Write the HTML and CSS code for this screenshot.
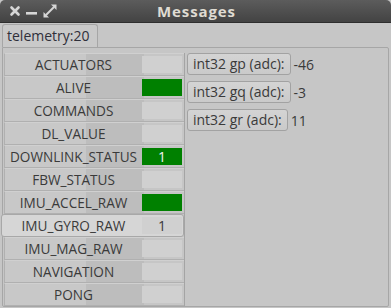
FILE: index.html
```html
<!DOCTYPE html>
<html>
<head>
<meta charset="utf-8">
<link rel="stylesheet" href="styles.css">
</head>
<body>
<div class="window">
  <div class="titlebar">
    <div class="controls">
      <svg class="ic" width="14" height="14" viewBox="0 0 14 14"><path d="M3.5 3.5 L10.5 10.5 M10.5 3.5 L3.5 10.5" stroke="#d6d6d6" stroke-width="2.6" stroke-linecap="round"/></svg>
      <svg class="ic" width="14" height="14" viewBox="0 0 14 14"><rect x="1" y="8" width="11" height="2.6" fill="#d6d6d6"/></svg>
      <svg class="ic" width="16" height="16" viewBox="0 0 16 16"><path d="M4 12 L12 4" stroke="#d6d6d6" stroke-width="2"/><path d="M9 1.5 L14.5 1.5 L14.5 7 Z" fill="#d6d6d6"/><path d="M1.5 9 L1.5 14.5 L7 14.5 Z" fill="#d6d6d6"/></svg>
    </div>
    <div class="title">Messages</div>
  </div>
  <div class="tabs">
    <div class="tab">telemetry:20</div>
  </div>
  <div class="panel">
    <div class="list">
      <div class="row"><div class="name">ACTUATORS</div><div class="val"></div></div>
      <div class="row"><div class="name">ALIVE</div><div class="val green"></div></div>
      <div class="row"><div class="name">COMMANDS</div><div class="val"></div></div>
      <div class="row"><div class="name">DL_VALUE</div><div class="val"></div></div>
      <div class="row"><div class="name">DOWNLINK_STATUS</div><div class="val green">1</div></div>
      <div class="row"><div class="name">FBW_STATUS</div><div class="val"></div></div>
      <div class="row"><div class="name">IMU_ACCEL_RAW</div><div class="val green"></div></div>
      <div class="row sel"><div class="name">IMU_GYRO_RAW</div><div class="val">1</div></div>
      <div class="row"><div class="name">IMU_MAG_RAW</div><div class="val"></div></div>
      <div class="row"><div class="name">NAVIGATION</div><div class="val"></div></div>
      <div class="row"><div class="name">PONG</div><div class="val"></div></div>
    </div>
    <div class="fields">
      <div class="field"><span class="btn">int32 gp (adc):</span><span class="fv">-46</span></div>
      <div class="field"><span class="btn">int32 gq (adc):</span><span class="fv">-3</span></div>
      <div class="field"><span class="btn">int32 gr (adc):</span><span class="fv">11</span></div>
    </div>
  </div>
</div>
</body>
</html>
```

FILE: styles.css
```css
html, body {
  margin: 0;
  padding: 0;
}
body {
  width: 391px;
  height: 308px;
  overflow: hidden;
  background: #c6c6c6;
  font-family: "Open Sans", "Noto Sans", sans-serif;
  font-size: 14px;
  color: #3a3a3a;
}
.window {
  width: 391px;
  height: 308px;
  display: flex;
  flex-direction: column;
  background: #c6c6c6;
}
.titlebar {
  height: 22px;
  flex: none;
  background: linear-gradient(#5c5c5c, #434343);
  border-bottom: 1px solid #2e2e2e;
  border-radius: 5px 5px 0 0;
  display: flex;
  align-items: center;
  position: relative;
}
.controls {
  display: flex;
  align-items: center;
  gap: 3px;
  padding-left: 8px;
}
.title {
  position: absolute;
  left: 0;
  right: 0;
  text-align: center;
  color: #dfdbd2;
  font-weight: bold;
  font-size: 15px;
  letter-spacing: 0.9px;
  top: 1px;
  padding-left: 2px;
}
.tabs {
  display: flex;
  padding: 1px 0 0 2px;
  height: 23px;
  flex: none;
}
.tab {
  padding: 1px 4px 0 4px;
  border: 1px solid #a6a6a6;
  border-bottom: none;
  border-radius: 3px 3px 0 0;
  width: 86px;
  background: #c9c9c9;
  font-size: 14px;
  color: #2f2f3a;
}
.panel {
  flex: 1;
  margin: 0 2px 2px 2px;
  border: 1px solid #a6a6a6;
  border-radius: 0 2px 2px 2px;
  display: flex;
  padding: 5px 0 0 0;
}
.list {
  width: 180px;
  display: flex;
  flex-direction: column;
  margin-left: 1px;
  background: linear-gradient(90deg, #c8c8c8 0, #c8c8c8 82px, #bdbdbd 82px, #bdbdbd 140px, #c6c6c6 140px);
  border-right: 1px solid #a4a4a4;
}
.row {
  height: 23px;
  display: flex;
  align-items: center;
  border-bottom: 1px solid #b0b0b0;
  border-top: 1px solid #d0d0d0;
  box-sizing: border-box;
  border-left: 1px solid #b0b0b0;
}
.name {
  width: 137px;
  text-align: center;
  font-size: 13.6px;
  white-space: nowrap;
}
.val {
  width: 40px;
  height: 17px;
  background: #d0d0d0;
  text-align: center;
  line-height: 17px;
}
.val.green {
  background: #008000;
  color: #f4f4f0;
}
.row.sel {
  background: #d6d6d6;
  border: 1px solid #a8a8a8;
  border-radius: 3px;
  margin-left: -3px;
  padding-left: 3px;
}
.row.sel .val {
  background: #d0d0d0;
}
.fields {
  display: flex;
  flex-direction: column;
  gap: 6px;
  padding-left: 2px;
}
.field {
  display: flex;
  align-items: center;
  height: 22px;
}
.btn {
  display: inline-block;
  height: 20px;
  line-height: 20px;
  padding: 0 5px;
  border: 1px solid #a2a2a2;
  border-radius: 3px;
  background: linear-gradient(#d4d4d4, #cacaca);
  font-size: 14px;
}
.fv {
  margin-left: 3px;
  font-size: 14px;
}
```
